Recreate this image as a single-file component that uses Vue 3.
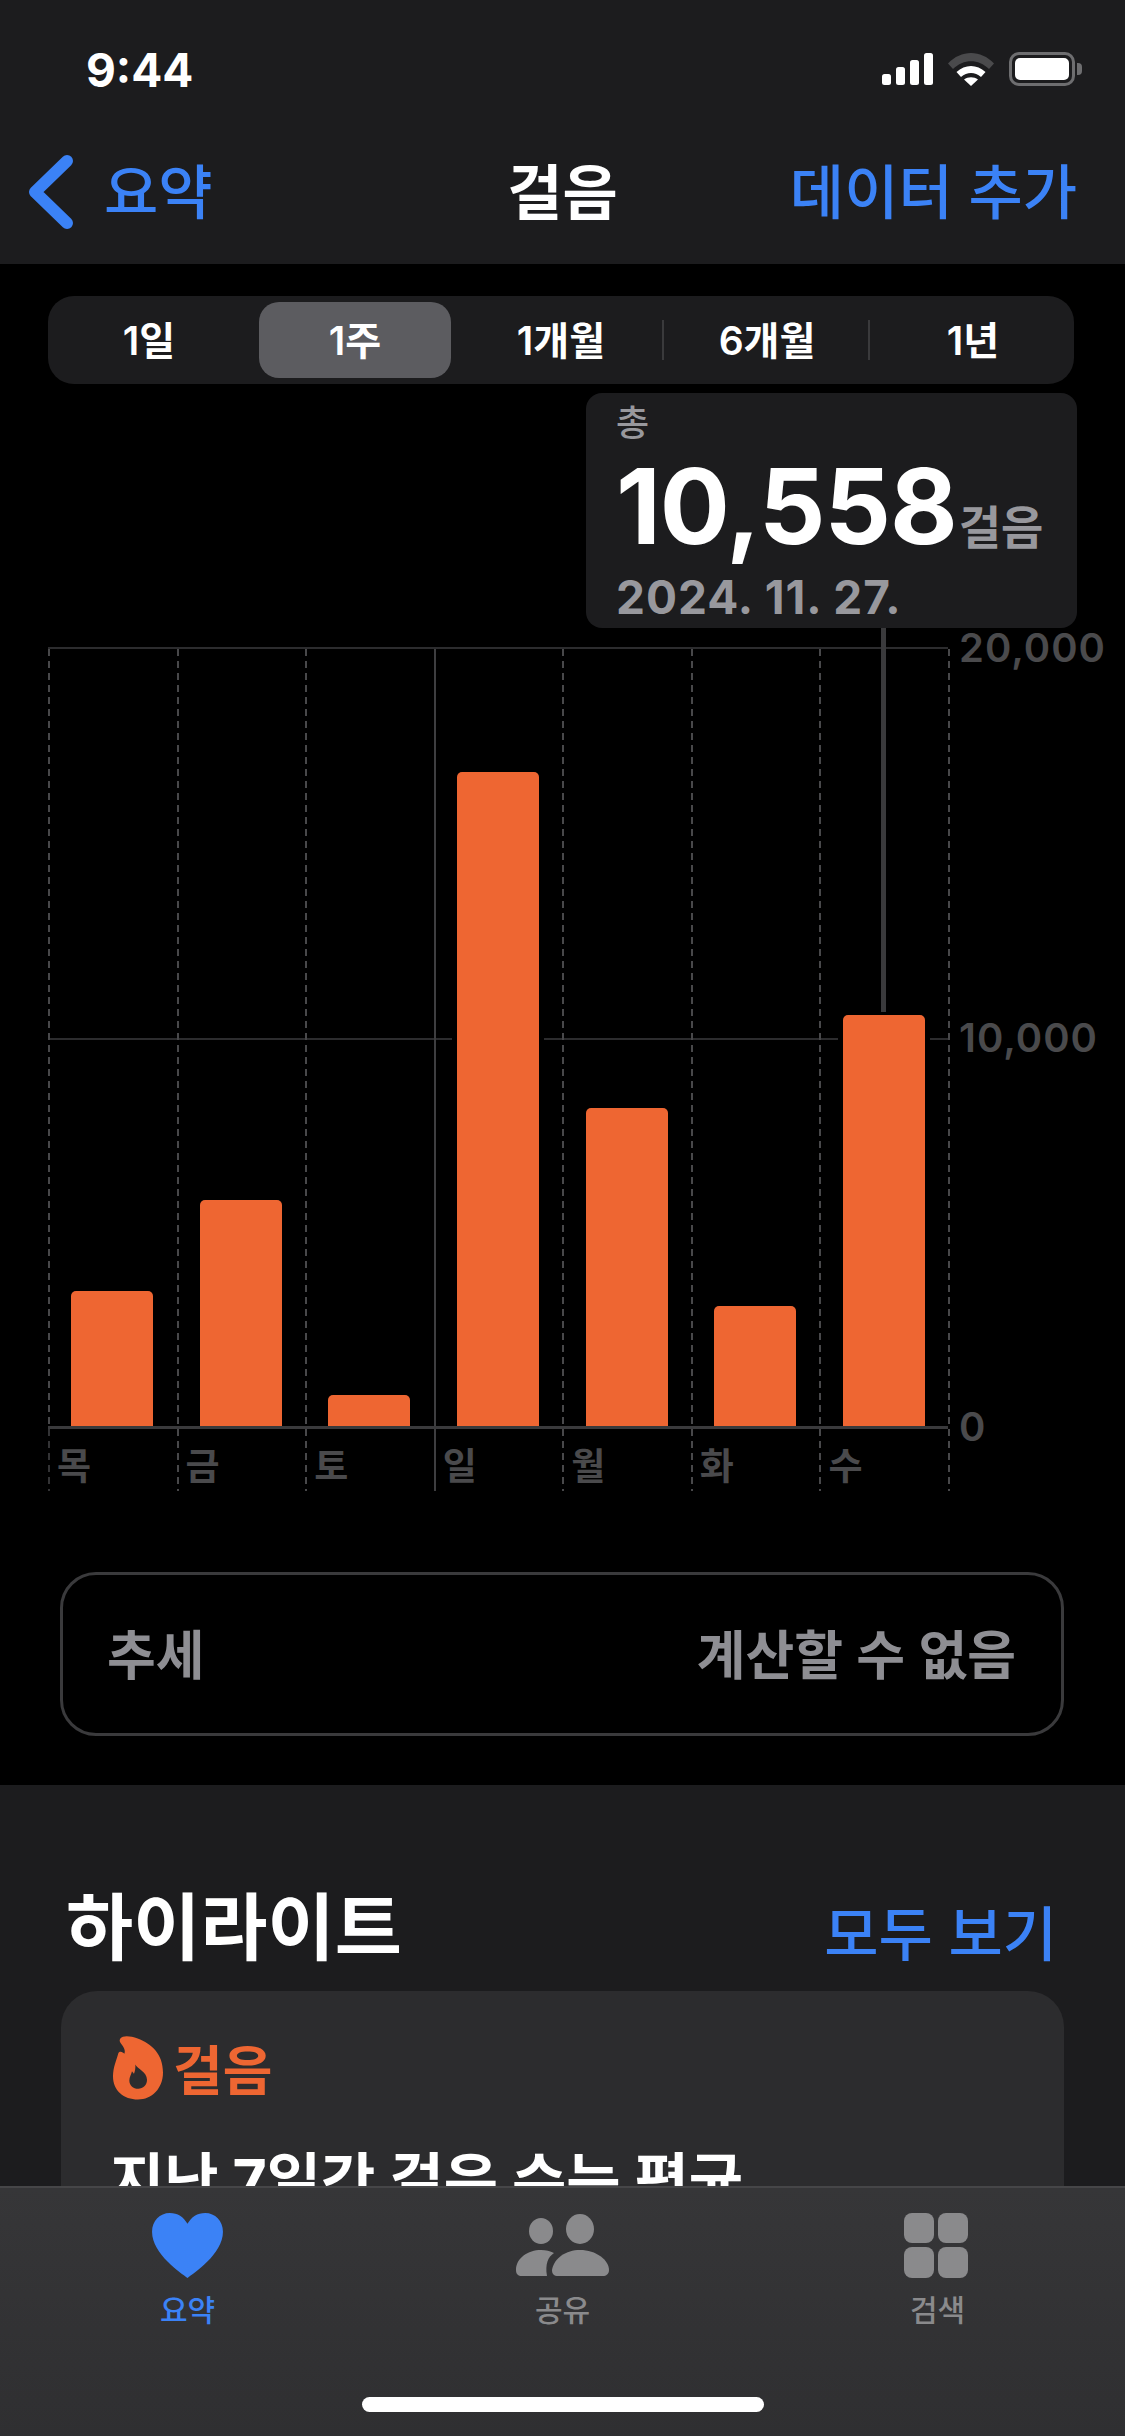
<script setup>
const segments = [
  { label: '1일' },
  { label: '1주', active: true },
  { label: '1개월' },
  { label: '6개월' },
  { label: '1년' }
]

// 막대 높이는 px 기준 (plot 높이 779 = 20,000걸음)
const days = [
  { label: '목', steps: 3470 },
  { label: '금', steps: 5800 },
  { label: '토', steps: 800 },
  { label: '일', steps: 16800, solid: true },
  { label: '월', steps: 8170 },
  { label: '화', steps: 3080 },
  { label: '수', steps: 10558 }
]
const barHeight = (steps) => (steps / 20000) * 779 + 'px'

const axis = ['20,000', '10,000', '0']
</script>

<template>
  <div class="page">
    <header class="top">
      <div class="status">
        <span class="time">9:44</span>
        <div class="status-icons">
          <svg width="51" height="32" viewBox="0 0 51 32">
            <rect x="0" y="21" width="9" height="11" rx="2.5" fill="#fff" />
            <rect x="14" y="14" width="9" height="18" rx="2.5" fill="#fff" />
            <rect x="28" y="7" width="9" height="25" rx="2.5" fill="#fff" />
            <rect x="42" y="0" width="9" height="32" rx="2.5" fill="#fff" />
          </svg>
          <svg width="46" height="33" viewBox="0 0 46 33">
            <path d="M0 10.500 C13 -3.500 33 -3.500 46 10.500 L41 16 C30.500 5.500 15.500 5.500 5 16 Z" fill="#4a4a4c" />
            <path d="M8.500 19 C17 11 29 11 37.500 19 L33 24 C27 18.500 19 18.500 13 24 Z" fill="#fff" />
            <path d="M16 26.500 C20 23.500 26 23.500 30 26.500 L23 33 Z" fill="#fff" />
          </svg>
          <div class="battery">
            <div class="battery-body"><div class="battery-fill"></div></div>
            <div class="battery-cap"></div>
          </div>
        </div>
      </div>
      <nav class="nav">
        <div class="nav-back">
          <svg width="46" height="76" viewBox="0 0 46 76">
            <path d="M39 7 L7 38 L39 69" fill="none" stroke="#3b82f6" stroke-width="12" stroke-linecap="round" stroke-linejoin="round" />
          </svg>
          <span class="nav-text">요약</span>
        </div>
        <span class="nav-title nav-text">걸음</span>
        <span class="nav-text">데이터 추가</span>
      </nav>
    </header>

    <main class="main">
      <div class="segments">
        <div
          v-for="(seg, i) in segments"
          :key="seg.label"
          class="segment"
          :class="{ divided: i > 2 }"
        >
          <span class="seg-inner" :class="{ active: seg.active }">{{ seg.label }}</span>
        </div>
      </div>

      <div class="chart-area">
        <div class="tooltip">
          <div class="tip-label">총</div>
          <div class="tip-value">10,558<span class="tip-unit">걸음</span></div>
          <div class="tip-date">2024. 11. 27.</div>
        </div>
        <div class="cursor"></div>

        <div class="chart">
          <div class="plot">
            <div class="mid-line"></div>
            <div
              v-for="d in days"
              :key="d.label"
              class="col"
              :class="{ solid: d.solid }"
            >
              <div class="bar" :style="{ height: barHeight(d.steps) }"></div>
            </div>
          </div>
          <div class="axis">
            <span v-for="a in axis" :key="a">{{ a }}</span>
          </div>
          <div class="labels">
            <div
              v-for="d in days"
              :key="d.label"
              class="day"
              :class="{ solid: d.solid }"
            >{{ d.label }}</div>
          </div>
        </div>
      </div>

      <div class="trend">
        <span>추세</span>
        <span>계산할 수 없음</span>
      </div>
    </main>

    <section class="highlights">
      <div class="hl-head">
        <h2>하이라이트</h2>
        <span>모두 보기</span>
      </div>
      <div class="hl-card">
        <div class="hl-tag">
          <svg width="50" height="65" viewBox="98 75 150 192">
            <path fill-rule="evenodd" fill="#ee6632" d="M120 84 C128 74 150 76 172 84 C214 100 248 130 248 186 C248 234 214 267 173 267 C130 267 98 240 98 198 C98 170 108 150 114 128 C118 120 128 124 132 130 C136 122 132 112 124 102 C118 95 116 90 120 84 Z M165 162 C170 174 200 184 200 208 C200 224 188 235 174 235 C158 235 147 224 147 210 C147 198 153 192 155 182 C158 186 160 188 161 190 C164 182 166 172 165 162 Z" />
          </svg>
          <span>걸음</span>
        </div>
        <p class="hl-text">지난 7일간 걸은 수는 평균</p>
      </div>
    </section>

    <footer class="tabbar">
      <div class="tab active">
        <div class="tab-icon">
          <svg width="71" height="65" viewBox="0 0 72 66">
            <path d="M36 66 C30 61 0 42 0 19 C0 8 8 0 18 0 C26 0 32 4 36 11 C40 4 46 0 54 0 C64 0 72 8 72 19 C72 42 42 61 36 66 Z" fill="#3b82f6" />
          </svg>
        </div>
        <span>요약</span>
      </div>
      <div class="tab">
        <div class="tab-icon">
          <svg width="93" height="62" viewBox="0 0 93 62">
            <ellipse cx="25" cy="17" rx="12" ry="13" fill="#8a8a8c" />
            <ellipse cx="64" cy="15" rx="14" ry="15" fill="#8a8a8c" />
            <path d="M0 56 C0 44 12 36 25 36 C30 36 34 37 38 39 C32 43 29 50 31 62 L6 62 C2 62 0 60 0 56 Z" fill="#8a8a8c" />
            <path d="M36 56 C38 44 50 36 64 36 C80 36 93 46 93 56 C93 60 90 62 87 62 L42 62 C38 62 36 60 36 56 Z" fill="#8a8a8c" />
          </svg>
        </div>
        <span>공유</span>
      </div>
      <div class="tab">
        <div class="tab-icon">
          <div class="grid-icon"><i></i><i></i><i></i><i></i></div>
        </div>
        <span>검색</span>
      </div>
      <div class="home-bar"></div>
    </footer>
  </div>
</template>

<style>
body {
  background: #000;
}
</style>

<style scoped>
.page {
  position: relative;
  width: 1125px;
  height: 2436px;
  overflow: hidden;
  background: #000;
  color: #fff;
  font-family: Inter, "Noto Sans CJK KR", sans-serif;
  display: flex;
  flex-direction: column;
}

/* header */
.top {
  height: 264px;
  background: #1c1c1e;
  flex: none;
}
.status {
  height: 152px;
  padding: 48px 43px 0 86px;
  box-sizing: border-box;
  display: flex;
  justify-content: space-between;
  align-items: flex-start;
}
.time {
  font-size: 46px;
  font-weight: 700;
  line-height: 44px;
}
.status-icons {
  display: flex;
  align-items: center;
  gap: 15px;
  margin-top: 4px;
}
.battery {
  display: flex;
  align-items: center;
  gap: 2px;
}
.battery-body {
  width: 66px;
  height: 34px;
  box-sizing: border-box;
  border: 3px solid #6e6e70;
  border-radius: 10px;
  padding: 3px;
}
.battery-fill {
  height: 100%;
  background: #fff;
  border-radius: 5px;
}
.battery-cap {
  width: 5px;
  height: 12px;
  background: #6e6e70;
  border-radius: 0 4px 4px 0;
}
.nav {
  position: relative;
  display: flex;
  justify-content: space-between;
  align-items: center;
  padding: 0 48px 0 28px;
  font-size: 59px;
  font-weight: 500;
  color: #3b82f6;
  height: 80px;
}
.nav-back {
  display: flex;
  align-items: center;
  gap: 30px;
}
.nav-text {
  padding-bottom: 8px;
}
.nav-title {
  position: absolute;
  left: 0;
  right: 0;
  text-align: center;
  color: #fff;
  font-size: 60px;
  font-weight: 700;
  pointer-events: none;
}

/* segmented control */
.main {
  height: 1521px;
  flex: none;
  padding: 32px 0 0 48px;
  box-sizing: border-box;
}
.segments {
  width: 1026px;
  height: 88px;
  box-sizing: border-box;
  padding: 6px 0;
  background: #1c1c1e;
  border-radius: 26px;
  display: grid;
  grid-template-columns: repeat(5, 206px);
  justify-content: center;
  font-size: 39px;
  font-weight: 600;
}
.segment {
  position: relative;
  display: flex;
}
.seg-inner {
  flex: 1;
  display: flex;
  align-items: center;
  justify-content: center;
  margin: 0 7px;
  padding-bottom: 5px;
  border-radius: 20px;
}
.seg-inner.active {
  background: #5c5c60;
}
.segment.divided::before {
  content: "";
  position: absolute;
  left: -2px;
  top: 18px;
  bottom: 18px;
  width: 2px;
  background: #3a3a3c;
}

/* chart */
.chart-area {
  position: relative;
  height: 1104px;
}
.tooltip {
  position: absolute;
  left: 538px;
  top: 9px;
  width: 491px;
  height: 235px;
  box-sizing: border-box;
  padding: 4px 0 0 30px;
  background: #1c1c1e;
  border-radius: 16px;
  z-index: 2;
}
.tip-label {
  font-size: 36px;
  line-height: 53px;
  color: #98989d;
  font-weight: 500;
}
.tip-value {
  font-size: 104px;
  font-weight: 700;
  line-height: 112px;
  white-space: nowrap;
  letter-spacing: -1px;
}
.tip-unit {
  font-size: 46px;
  font-weight: 600;
  color: #98989d;
  margin-left: 2px;
  letter-spacing: 0;
}
.tip-date {
  font-size: 46px;
  font-weight: 700;
  line-height: 50px;
  margin-top: -11px;
  letter-spacing: 1px;
  color: #98989d;
  white-space: nowrap;
}
.cursor {
  position: absolute;
  left: 833px;
  top: 244px;
  width: 5px;
  height: 384px;
  background: #3a3a3c;
  z-index: 1;
}
.chart {
  position: absolute;
  left: 0;
  right: 0;
  top: 263px;
  display: grid;
  grid-template-columns: 900px 1fr;
}
.plot {
  position: relative;
  height: 777px;
  display: grid;
  grid-template-columns: repeat(7, 1fr);
  border-top: 2px solid #2c2c2e;
  border-bottom: 3px solid #3a3a3c;
}
.mid-line {
  position: absolute;
  left: 0;
  right: 0;
  top: 389px;
  height: 2px;
  background: #2c2c2e;
}
.col,
.day {
  position: relative;
  background: repeating-linear-gradient(to bottom, #48484a 0 7px, transparent 7px 12px) left top / 2px 100% no-repeat;
}
.col:first-of-type,
.day:first-child {
  background-image: repeating-linear-gradient(to bottom, #333335 0 7px, transparent 7px 12px);
}
.col.solid,
.day.solid {
  background: linear-gradient(#3e3e40, #3e3e40) left top / 2px 100% no-repeat;
}
.col:last-of-type::after,
.day:last-child::after {
  content: "";
  position: absolute;
  right: -2px;
  top: 0;
  bottom: 0;
  width: 2px;
  background: repeating-linear-gradient(to bottom, #48484a 0 7px, transparent 7px 12px);
}
.col {
  display: flex;
  align-items: flex-end;
  justify-content: center;
}
.bar {
  width: 82px;
  background: #ee6632;
  border-radius: 5px 5px 0 0;
  box-shadow: 5px 0 0 #000, -5px 0 0 #000;
}
.axis {
  height: 779px;
  padding-left: 11px;
  display: flex;
  flex-direction: column;
  justify-content: space-between;
  font-size: 40px;
  font-weight: 600;
  color: #4a4a4c;
  letter-spacing: 1px;
}
.axis span {
  height: 0;
  line-height: 2px;
}
.labels {
  height: 58px;
  display: grid;
  grid-template-columns: repeat(7, 1fr);
  font-size: 37px;
  font-weight: 600;
  color: #4a4a4c;
}
.day {
  padding: 8px 0 0 9px;
}
.trend {
  width: 1004px;
  height: 164px;
  margin-left: 12px;
  margin-top: 84px;
  box-sizing: border-box;
  border: 3px solid #3a3a3c;
  border-radius: 36px;
  padding: 0 45px 5px 44px;
  display: flex;
  align-items: center;
  justify-content: space-between;
  font-size: 53px;
  font-weight: 600;
  color: #8e8e93;
}

/* highlights */
.highlights {
  flex: 1;
  background: #1c1c1e;
  padding: 80px 61px 0;
}
.hl-head {
  display: flex;
  justify-content: space-between;
  align-items: center;
  height: 114px;
  padding: 0 7px 12px 5px;
}
.hl-head h2 {
  margin: 0;
  font-size: 73px;
  font-weight: 700;
}
.hl-head span {
  font-size: 59px;
  font-weight: 500;
  color: #3b82f6;
  margin-top: 16px;
}
.hl-card {
  background: #2c2c2e;
  border-radius: 36px;
  padding: 37px 49px;
  height: 400px;
}
.hl-tag {
  display: flex;
  align-items: center;
  gap: 10px;
  color: #ee6632;
  font-size: 54px;
  font-weight: 600;
  margin-left: 3px;
}
.hl-text {
  margin: 27px 0 0;
  font-size: 59px;
  font-weight: 700;
  white-space: nowrap;
}

/* tab bar */
.tabbar {
  position: absolute;
  left: 0;
  right: 0;
  bottom: 0;
  height: 250px;
  box-sizing: border-box;
  border-top: 2px solid #464648;
  background: linear-gradient(to bottom, #363638, #2f2f31);
  display: grid;
  grid-template-columns: repeat(3, 1fr);
  padding: 23px 0 0;
}
.tab {
  display: flex;
  flex-direction: column;
  align-items: center;
  gap: 14px;
  font-size: 30px;
  line-height: 34px;
  font-weight: 500;
  color: #8a8a8c;
}
.tab.active {
  color: #3b82f6;
}
.tab-icon {
  height: 68px;
  display: flex;
  align-items: center;
}
.grid-icon {
  width: 64px;
  height: 65px;
  margin-right: 4px;
  display: grid;
  grid-template-columns: 1fr 1fr;
  grid-template-rows: 1fr 1fr;
  gap: 4px;
}
.grid-icon i {
  background: #8a8a8c;
  border-radius: 8px;
}
.home-bar {
  position: absolute;
  left: 362px;
  bottom: 24px;
  width: 402px;
  height: 15px;
  border-radius: 8px;
  background: #fff;
}
</style>
